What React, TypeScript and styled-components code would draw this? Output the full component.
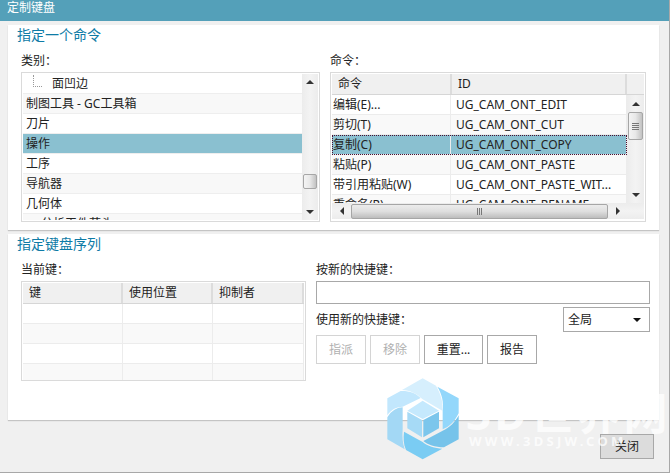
import React from "react";
import styled, { createGlobalStyle } from "styled-components";

const Global = createGlobalStyle`
  html, body { margin: 0; padding: 0; background: #f0f0f0; }
  * { box-sizing: border-box; }
`;

const FONT = `"Noto Sans", "Noto Sans CJK SC", sans-serif`;

const Dialog = styled.div`
  position: relative;
  width: 670px;
  height: 473px;
  overflow: hidden;
  background: #f0f0f0;
  border-right: 1px solid #a8a8a8;
  border-bottom: 1px solid #a8a8a8;
  font: 12px/16px ${FONT};
  color: #222;
`;
const TitleBar = styled.div`
  height: 21px;
  background: #54a0b9;
  color: #fff;
  padding: 0 7px;
  line-height: 15px;
`;
const Panel = styled.section<{ $h: number; $mt: number }>`
  width: 651px;
  height: ${(p) => p.$h}px;
  margin: ${(p) => p.$mt}px 0 0 8px;
  background: #fff;
  box-shadow: 0 1px 1px #c4c4c4;
`;
const SectionTitle = styled.h2`
  margin: 0;
  padding-left: 9px;
  height: 20px;
  font: 400 14px/20px ${FONT};
  color: #0e7ba6;
`;
const TopGrid = styled.div`
  display: grid;
  grid-template-columns: 299px 316px;
  column-gap: 10px;
  margin: 5px 0 0 13px;
`;
const BottomGrid = styled.div`
  display: grid;
  grid-template-columns: 285px 334px;
  column-gap: 10px;
  margin: 4px 0 0 13px;
`;
const Label = styled.div<{ $h?: number }>`
  height: ${(p) => p.$h ?? 22}px;
  line-height: ${(p) => p.$h ?? 22}px;
  white-space: nowrap;
`;
const Frame = styled.div<{ $h: number }>`
  height: ${(p) => p.$h}px;
  border: 1px solid #dadada;
  padding: 1px;
  background: #fff;
  overflow: hidden;
`;
const ListLayout = styled.div`
  display: flex;
  height: 100%;
`;
const ListRows = styled.div`
  width: 279px;
  height: 146px;
  overflow: hidden;
`;
const ListRow = styled.div<{ $alt?: boolean; $sel?: boolean; $first?: boolean }>`
  display: flex;
  align-items: center;
  height: 20px;
  padding-left: 3px;
  border-bottom: 1px solid #eeeeee;
  background: ${(p) => (p.$sel ? "#8ac0d0" : p.$alt ? "#f8f8f8" : "#fff")};
  white-space: nowrap;
  overflow: hidden;
`;
const TreeLine = styled.span`
  width: 9px;
  height: 12px;
  margin: -6px 10px 0 7px;
  border-left: 1px dotted #999;
  border-bottom: 1px dotted #999;
`;
const VBar = styled.div<{ $w: number }>`
  width: ${(p) => p.$w}px;
  flex: none;
  display: flex;
  flex-direction: column;
  align-items: stretch;
  background: linear-gradient(90deg, #ececec, #f3f3f3 50%, #ececec);
`;
const HBar = styled.div`
  display: flex;
  align-items: center;
  height: 16px;
  background: linear-gradient(180deg, #ececec, #f3f3f3 50%, #ececec);
`;
const Spacer = styled.div<{ $size?: number }>`
  ${(p) => (p.$size != null ? `flex: 0 0 ${p.$size}px;` : "flex: 1;")}
`;
const ArrowCell = styled.div<{ $h?: number; $w?: number }>`
  flex: none;
  display: flex;
  align-items: center;
  justify-content: center;
  height: ${(p) => (p.$h ? `${p.$h}px` : "100%")};
  width: ${(p) => (p.$w ? `${p.$w}px` : "100%")};
`;
const Thumb = styled.div<{ $h: number }>`
  flex: none;
  height: ${(p) => p.$h}px;
  margin: 0 1px;
  display: flex;
  flex-direction: column;
  align-items: center;
  justify-content: center;
  gap: 1px;
  border: 1px solid #a6a6a6;
  border-radius: 2px;
  background: linear-gradient(90deg, #f4f4f4, #e8e8e8 50%, #c2c2c2);
`;
const HThumb = styled.div`
  flex: none;
  width: 257px;
  height: 15px;
  display: flex;
  align-items: center;
  justify-content: center;
  gap: 1px;
  border: 1px solid #a6a6a6;
  border-radius: 2px;
  background: linear-gradient(180deg, #ececec, #dedede 50%, #bdbdbd);
`;
const GripH = styled.i`
  width: 7px;
  height: 1px;
  background: #777;
`;
const GripV = styled.i`
  width: 1px;
  height: 7px;
  background: #777;
`;
const TableColumn = styled.div`
  width: 296px;
  flex: none;
`;
const HeaderRow = styled.div<{ $cols: string }>`
  display: grid;
  grid-template-columns: ${(p) => p.$cols};
  height: 21px;
  background: #f0f0f0;
  border-bottom: 1px solid #d6d6d6;
`;
const HeaderCell = styled.div<{ $pad?: number }>`
  padding-left: ${(p) => p.$pad ?? 6}px;
  line-height: 20px;
  border-right: 2px solid #dcdcdc;
  white-space: nowrap;
`;
const Row = styled.div<{ $cols: string; $alt?: boolean; $sel?: boolean; $h?: number }>`
  position: relative;
  display: grid;
  grid-template-columns: ${(p) => p.$cols};
  height: ${(p) => p.$h ?? 20}px;
  overflow: hidden;
  background: ${(p) => (p.$sel ? "#8ac0d0" : p.$alt ? "#f9f9f9" : "#fff")};
  border-bottom: 1px solid #ececec;
  ${(p) => (p.$sel ? "outline: 1px dotted #4a1030; outline-offset: -1px;" : "")}
`;
const Cell = styled.div<{ $pad?: number; $clip?: boolean }>`
  padding-left: ${(p) => p.$pad ?? 1}px;
  line-height: 19px;
  white-space: nowrap;
  border-right: 1px solid #ececec;
  overflow: hidden;
`;
const TopTableBody = styled.div`
  display: flex;
  height: 108px;
`;
const TopRows = styled.div`
  width: 295px;
  overflow: hidden;
`;
const TextInput = styled.div`
  height: 23px;
  border: 1px solid #a8a8a8;
  background: #fff;
`;
const ScopeRow = styled.div`
  display: flex;
  align-items: center;
  justify-content: space-between;
  height: 31px;
`;
const Select = styled.div`
  display: flex;
  align-items: center;
  justify-content: space-between;
  width: 87px;
  height: 25px;
  padding: 0 8px 0 4px;
  border: 1px solid #a8a8a8;
  background: #fff;
`;
const Buttons = styled.div`
  display: flex;
  gap: 4px;
`;
const Button = styled.button<{ $w: number; $off?: boolean; $close?: boolean }>`
  width: ${(p) => p.$w}px;
  height: ${(p) => (p.$close ? 25 : 29)}px;
  padding: 0;
  border: 1px solid ${(p) => (p.$off ? "#d4d4d4" : "#a8a8a8")};
  background: ${(p) => (p.$close ? "#dcdcdc" : "#fff")};
  color: ${(p) => (p.$off ? "#b0b0b0" : "#222")};
  font: 12px/16px ${FONT};
`;
const Footer = styled.div`
  display: flex;
  justify-content: flex-end;
  padding: 14px 15px 0 0;
`;
const Watermark = styled.div`
  position: absolute;
  left: 385px;
  top: 376px;
  width: 76px;
  height: 86px;
  pointer-events: none;
`;
const BrandBig = styled.div`
  position: absolute;
  left: 466px;
  top: 388px;
  font: 700 44px/50px ${FONT};
  letter-spacing: 3px;
  color: rgba(255, 255, 255, 0.75);
  white-space: nowrap;
  pointer-events: none;
`;
const BrandSmall = styled.div`
  position: absolute;
  left: 469px;
  top: 432px;
  font: 700 13px/18px ${FONT};
  letter-spacing: 3.3px;
  color: rgba(255, 255, 255, 0.75);
  white-space: nowrap;
  pointer-events: none;
`;

const Tri = ({ dir, color = "#333" }: { dir: "up" | "down" | "left" | "right"; color?: string }) => {
  const pts = { up: "0,5 4,1 8,5", down: "0,1 8,1 4,5", left: "5,0 5,8 1,4", right: "1,0 1,8 5,4" }[dir];
  const horiz = dir === "left" || dir === "right";
  return (
    <svg width={horiz ? 6 : 8} height={horiz ? 8 : 6} viewBox={horiz ? "0 0 6 8" : "0 0 8 6"}>
      <polygon points={pts} fill={color} />
    </svg>
  );
};

const Logo = () => (
  <svg width="76" height="86" viewBox="15 18 228 258">
    <path d="M66 60 L128 25 L168 47 C184 75 190 100 187 122 L128 88 C112 72 90 60 66 60Z" fill="#d6effd" />
    <path d="M172 50 L236 85 L236 130 C222 158 205 172 188 178 L188 122 C192 98 186 72 172 50Z" fill="#93d7fb" />
    <path d="M236 136 L236 208 L192 232 C165 232 142 224 130 213 L188 182 C208 174 226 156 236 136Z" fill="#76c3ea" />
    <path d="M72 185 L128 216 C142 228 165 235 187 236 L128 268 L78 240 C70 222 70 204 72 185Z" fill="#7accf3" />
    <path d="M22 142 C34 122 52 112 68 112 L68 178 C66 200 68 220 74 238 L22 208Z" fill="#a3d8f5" />
    <path d="M22 85 L62 63 C88 62 108 70 122 84 L68 110 C50 110 34 118 22 136Z" fill="#c2e7fd" />
    <polygon points="128,92 177,122 128,147 82,122" fill="#c5e9fd" />
    <polygon points="82,125 126,150 126,202 82,175" fill="#a6daf6" />
    <polygon points="177,125 130,150 130,202 177,175" fill="#7cc6ec" />
  </svg>
);

const listRows = ["制图工具 - GC工具箱", "刀片", "操作", "工序", "导航器", "几何体", "　 分析工件节头"];
const cmdCols = "119px 176px";
const cmds: [string, string][] = [
  ["编辑(E)...", "UG_CAM_ONT_EDIT"],
  ["剪切(T)", "UG_CAM_ONT_CUT"],
  ["复制(C)", "UG_CAM_ONT_COPY"],
  ["粘贴(P)", "UG_CAM_ONT_PASTE"],
  ["带引用粘贴(W)", "UG_CAM_ONT_PASTE_WIT..."],
  ["重命名(R)", "UG_CAM_ONT_RENAME"],
];
const keyCols = "100px 90px 91px";

export default function App() {
  return (
    <Dialog>
      <Global />
      <TitleBar>定制键盘</TitleBar>
      <Panel $h={205} $mt={4}>
        <SectionTitle>指定一个命令</SectionTitle>
        <TopGrid>
          <div>
            <Label>类别：</Label>
            <Frame $h={150}>
              <ListLayout>
                <ListRows>
                  <ListRow $first>
                    <TreeLine />
                    面凹边
                  </ListRow>
                  {listRows.map((t, i) => (
                    <ListRow key={t} $alt={i % 2 === 0} $sel={t === "操作"}>
                      {t}
                    </ListRow>
                  ))}
                </ListRows>
                <VBar $w={16}>
                  <ArrowCell $h={16}>
                    <Tri dir="up" />
                  </ArrowCell>
                  <Spacer />
                  <Thumb $h={15} />
                  <Spacer $size={15} />
                  <ArrowCell $h={16}>
                    <Tri dir="down" />
                  </ArrowCell>
                </VBar>
              </ListLayout>
            </Frame>
          </div>
          <div>
            <Label>命令：</Label>
            <Frame $h={150}>
              <HeaderRow $cols="120px 175px 17px">
                <HeaderCell>命令</HeaderCell>
                <HeaderCell>ID</HeaderCell>
                <div />
              </HeaderRow>
              <TopTableBody>
                <TopRows>
                  {cmds.map(([a, b], i) => (
                    <Row key={b} $cols={cmdCols} $alt={i % 2 === 1 && i !== 2} $sel={i === 2}>
                      <Cell>{a}</Cell>
                      <Cell $pad={5}>{b}</Cell>
                    </Row>
                  ))}
                </TopRows>
                <VBar $w={17}>
                  <ArrowCell $h={17}>
                    <Tri dir="up" />
                  </ArrowCell>
                  <Thumb $h={28}>
                    <GripH />
                    <GripH />
                    <GripH />
                    <GripH />
                  </Thumb>
                  <Spacer />
                  <ArrowCell $h={17}>
                    <Tri dir="down" />
                  </ArrowCell>
                </VBar>
              </TopTableBody>
              <HBar>
                <ArrowCell $w={19}>
                  <Tri dir="left" />
                </ArrowCell>
                <HThumb>
                  <GripV />
                  <GripV />
                  <GripV />
                </HThumb>
                <ArrowCell $w={20}>
                  <Tri dir="right" />
                </ArrowCell>
              </HBar>
            </Frame>
          </div>
        </TopGrid>
      </Panel>
      <Panel $h={186} $mt={4}>
        <SectionTitle>指定键盘序列</SectionTitle>
        <BottomGrid>
          <div>
            <Label $h={23}>当前键：</Label>
            <Frame $h={100}>
              <HeaderRow $cols="100px 90px 91px">
                <HeaderCell>键</HeaderCell>
                <HeaderCell>使用位置</HeaderCell>
                <HeaderCell>抑制者</HeaderCell>
              </HeaderRow>
              {[0, 1, 2, 3].map((i) => (
                <Row key={i} $cols={keyCols} $alt={i % 2 === 1}>
                  <Cell />
                  <Cell />
                  <Cell />
                </Row>
              ))}
            </Frame>
          </div>
          <div>
            <Label $h={23}>按新的快捷键：</Label>
            <TextInput />
            <ScopeRow>
              <span>使用新的快捷键：</span>
              <Select>
                全局
                <Tri dir="down" color="#111" />
              </Select>
            </ScopeRow>
            <Buttons>
              <Button $w={50} $off>
                指派
              </Button>
              <Button $w={50} $off>
                移除
              </Button>
              <Button $w={59}>重置...</Button>
              <Button $w={50}>报告</Button>
            </Buttons>
          </div>
        </BottomGrid>
      </Panel>
      <Footer>
        <Button $w={54} $close>
          关闭
        </Button>
      </Footer>
      <BrandBig>3D世界网</BrandBig>
      <BrandSmall>WWW.3DSJW.COM</BrandSmall>
      <Watermark>
        <Logo />
      </Watermark>
    </Dialog>
  );
}
